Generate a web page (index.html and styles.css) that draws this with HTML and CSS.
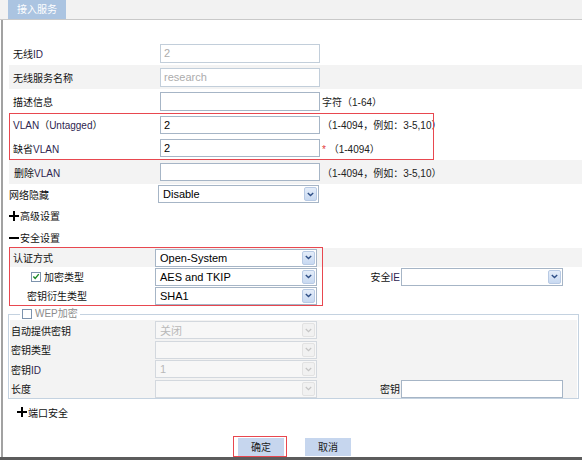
FILE: index.html
```html
<!DOCTYPE html>
<html lang="zh-CN">
<head>
<meta charset="utf-8">
<title>接入服务</title>
<link rel="stylesheet" href="styles.css">
</head>
<body>
<div class="page">
  <div class="tabbar"><div class="tab">接入服务</div></div>
  <div class="main">
    <div class="row r24">
      <span class="lbl lbl-a">无线<span class="en">ID</span></span>
      <input class="txt" value="2" disabled>
    </div>
    <div class="row r24 grey">
      <span class="lbl lbl-a">无线服务名称</span>
      <input class="txt" value="research" disabled>
    </div>
    <div class="row r24">
      <span class="lbl lbl-a">描述信息</span>
      <input class="txt" value="">
      <span class="hint">字符（1-64）</span>
    </div>
    <div class="row r23">
      <span class="lbl lbl-a"><span class="en">VLAN</span>（<span class="en">Untagged</span>）</span>
      <input class="txt txt-s" value="2">
      <span class="hint">（1-4094，例如：3-5,10）</span>
    </div>
    <div class="row r24">
      <span class="lbl lbl-a">缺省<span class="en">VLAN</span></span>
      <input class="txt txt-s" value="2">
      <span class="hint"><span class="req">*</span> （1-4094）</span>
    </div>
    <div class="row r24 grey">
      <span class="lbl lbl-b">删除<span class="en">VLAN</span></span>
      <input class="txt txt-s" value="">
      <span class="hint">（1-4094，例如：3-5,10）</span>
    </div>
    <div class="row r20">
      <span class="lbl lbl-c">网络隐藏</span>
      <div class="sel sel-n"><span class="sel-t">Disable</span><span class="sel-b"><svg width="7" height="5" viewBox="0 0 7 5"><path d="M0.8 1L3.5 3.6L6.2 1" fill="none" stroke="#2f4f86" stroke-width="1.4"/></svg></span></div>
    </div>
    <div class="row r23 sec">
      <svg class="sign" width="10" height="10" viewBox="0 0 10 10"><path d="M0 5H10M5 0V10" stroke="#000" stroke-width="2"/></svg><span>高级设置</span>
    </div>
    <div class="row r21 sec">
      <svg class="sign" width="10" height="10" viewBox="0 0 10 10"><path d="M0 5H10" stroke="#000" stroke-width="2"/></svg><span>安全设置</span>
    </div>
    <div class="row r19 grey">
      <span class="lbl lbl-d">认证方式</span>
      <div class="sel"><span class="sel-t">Open-System</span><span class="sel-b"><svg width="7" height="5" viewBox="0 0 7 5"><path d="M0.8 1L3.5 3.6L6.2 1" fill="none" stroke="#2f4f86" stroke-width="1.4"/></svg></span></div>
    </div>
    <div class="row r19">
      <span class="lbl lbl-e"><span class="chk on"><svg width="9" height="9" viewBox="0 0 9 9"><path d="M1.5 4.5L3.6 6.6L7.6 1.8" fill="none" stroke="#1f8a2a" stroke-width="1.6"/></svg></span>加密类型</span>
      <div class="sel"><span class="sel-t">AES and TKIP</span><span class="sel-b"><svg width="7" height="5" viewBox="0 0 7 5"><path d="M0.8 1L3.5 3.6L6.2 1" fill="none" stroke="#2f4f86" stroke-width="1.4"/></svg></span></div>
      <span class="lbl lbl-r">安全<span class="en">IE</span></span>
      <div class="sel"><span class="sel-t"></span><span class="sel-b"><svg width="7" height="5" viewBox="0 0 7 5"><path d="M0.8 1L3.5 3.6L6.2 1" fill="none" stroke="#2f4f86" stroke-width="1.4"/></svg></span></div>
    </div>
    <div class="row r19">
      <span class="lbl lbl-f">密钥衍生类型</span>
      <div class="sel"><span class="sel-t">SHA1</span><span class="sel-b"><svg width="7" height="5" viewBox="0 0 7 5"><path d="M0.8 1L3.5 3.6L6.2 1" fill="none" stroke="#2f4f86" stroke-width="1.4"/></svg></span></div>
    </div>
    <fieldset class="wep">
      <legend class="wep-lg"><span class="chk"></span><span class="en">WEP</span>加密</legend>
      <div class="row w20 grey">
        <span class="lbl lbl-w">自动提供密钥</span>
        <div class="sel off"><span class="sel-t">关闭</span><span class="sel-b"><svg width="7" height="5" viewBox="0 0 7 5"><path d="M0.8 1L3.5 3.6L6.2 1" fill="none" stroke="#c4c4c4" stroke-width="1.2"/></svg></span></div>
      </div>
      <div class="row w19 grey">
        <span class="lbl lbl-w">密钥类型</span>
        <div class="sel off"><span class="sel-t"></span><span class="sel-b"><svg width="7" height="5" viewBox="0 0 7 5"><path d="M0.8 1L3.5 3.6L6.2 1" fill="none" stroke="#c4c4c4" stroke-width="1.2"/></svg></span></div>
      </div>
      <div class="row w20 grey">
        <span class="lbl lbl-w">密钥<span class="en">ID</span></span>
        <div class="sel off"><span class="sel-t">1</span><span class="sel-b"><svg width="7" height="5" viewBox="0 0 7 5"><path d="M0.8 1L3.5 3.6L6.2 1" fill="none" stroke="#c4c4c4" stroke-width="1.2"/></svg></span></div>
      </div>
      <div class="row w19 grey">
        <span class="lbl lbl-w">长度</span>
        <div class="sel off"><span class="sel-t"></span><span class="sel-b"><svg width="7" height="5" viewBox="0 0 7 5"><path d="M0.8 1L3.5 3.6L6.2 1" fill="none" stroke="#c4c4c4" stroke-width="1.2"/></svg></span></div>
        <span class="lbl lbl-r">密钥</span>
        <input class="txt txt-k" value="">
      </div>
    </fieldset>
    <div class="row r18 sec port">
      <svg class="sign" width="10" height="10" viewBox="0 0 10 10"><path d="M0 5H10M5 0V10" stroke="#000" stroke-width="2"/></svg><span>端口安全</span>
    </div>
    <div class="row btns">
      <button class="btn" type="button">确定</button>
      <button class="btn" type="button">取消</button>
    </div>
  </div>
  <div class="mark mark-vlan"></div>
  <div class="mark mark-sec"></div>
  <div class="mark mark-ok"></div>
</div>
</body>
</html>
```
FILE: styles.css
```css
* { box-sizing: border-box; }
html, body { margin: 0; padding: 0; }
body {
  width: 582px;
  height: 460px;
  overflow: hidden;
  background: #fff;
  font-family: "Liberation Sans", "Noto Sans CJK SC", sans-serif;
  font-size: 10px;
  color: #111;
}
.page {
  position: relative;
  height: 460px;
  border-bottom: 3px solid #5c5c5c;
}
.tabbar {
  height: 20px;
  background: #f2f2f2;
  border-bottom: 1px solid #c9c9c9;
  padding-left: 8px;
}
.tab {
  width: 58px;
  height: 19px;
  background: #abc4e1;
  color: #fff;
  font-size: 10px;
  line-height: 19px;
  text-align: center;
}
.main {
  margin-left: 1px;
  border-left: 2px solid #a2a2a2;
  height: 437px;
  padding-left: 6px;
  padding-top: 21px;
}
.row { display: flex; align-items: center; }
.r24 { height: 24px; }
.r23 { height: 23px; }
.r21 { height: 21px; }
.r20 { height: 20px; }
.r19 { height: 19px; }
.r18 { height: 18px; }
.w20 { height: 20px; }
.w19 { height: 19px; }
.grey { background: #f3f3f3; }
.en { color: #2e2550; }
.lbl { flex: none; white-space: nowrap; }
.lbl-a { width: 151px; padding-left: 4px; }
.lbl-b { width: 151px; padding-left: 5px; }
.lbl-c { width: 149px; }
.lbl-d { width: 146px; padding-left: 4px; }
.lbl-e { width: 146px; padding-left: 22px; display: flex; align-items: center; }
.lbl-f { width: 146px; padding-left: 18px; }
.lbl-w { width: 145px; padding-left: 1px; }
.lbl-r { width: 84px; padding-right: 1px; text-align: right; }
.txt {
  width: 160px;
  height: 19px;
  margin: 0;
  padding: 0 3px;
  border: 1px solid #a6b5c6;
  background: #fff;
  font-family: "Liberation Sans", "Noto Sans CJK SC", sans-serif;
  font-size: 11px;
  color: #000;
  outline: none;
}
.txt:disabled { color: #acacac; border-color: #c2ceda; background: #fff; }
.txt-s { height: 18px; }
.txt-k { width: 162px; height: 18px; }
.hint { margin-left: 2px; color: #222; white-space: nowrap; }
.req { color: #e23b3b; }
.sel {
  flex: none;
  display: flex;
  align-items: center;
  width: 162px;
  height: 18px;
  border: 1px solid #a6b5c6;
  background: #fff;
}
.sel-n { width: 161px; }
.sel-t { flex: 1; padding-left: 4px; font-size: 11px; color: #000; white-space: nowrap; overflow: hidden; }
.sel-b {
  flex: none;
  width: 13px;
  height: 14px;
  margin-right: 1px;
  display: flex;
  align-items: center;
  justify-content: center;
  background: linear-gradient(#e4edf9, #c8d9f1);
  border: 1px solid #b8cae4;
  border-radius: 2px;
}
.sel.off { background: #f7f7f7; border-color: #d3d8de; }
.sel.off .sel-t { color: #b9b9b9; }
.sel.off .sel-b { background: #f1f1f1; border-color: #e2e2e2; }
.sec { font-size: 10px; }
.sign { flex: none; margin-right: 1px; }
.port { margin-top: 4px; padding-left: 8px; }
.chk {
  flex: none;
  width: 10px;
  height: 10px;
  margin-right: 3px;
  border: 1px solid #7d93ad;
  background: #fff;
  display: inline-flex;
  align-items: center;
  justify-content: center;
}
.wep {
  margin: 3px 0 0 -1px;
  width: 571px;
  min-width: 0;
  padding: 0 1px;
  border: 1px solid #c4d2e0;
}
.wep-lg {
  margin-left: 10px;
  padding: 0 2px;
  height: 12px;
  line-height: 12px;
  display: flex;
  align-items: center;
  color: #8c8c8c;
}
.wep-lg .en { color: #8c8c8c; }
.btns { margin-top: 16px; height: 19px; padding-left: 229px; gap: 21px; }
.btn {
  width: 46px;
  height: 18px;
  margin: 0;
  padding: 0;
  border: none;
  background: #c6d6ee;
  color: #1c1c1c;
  font-family: "Liberation Sans", "Noto Sans CJK SC", sans-serif;
  font-size: 10px;
}
.mark { position: absolute; z-index: 2; box-shadow: inset 0 0 0 1px #e8474f; }
.mark-vlan { left: 9px; top: 113px; width: 425px; height: 47px; }
.mark-sec { left: 9px; top: 247px; width: 314px; height: 59px; }
.mark-ok { left: 233px; top: 436px; width: 54px; height: 21px; }
```
